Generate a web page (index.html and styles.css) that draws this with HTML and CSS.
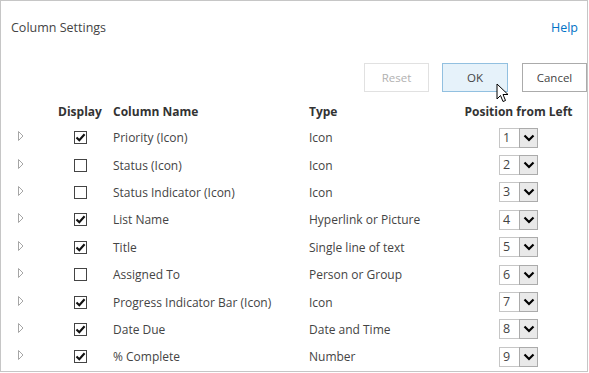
FILE: index.html
```html
<!DOCTYPE html>
<html>
<head>
<meta charset="utf-8">
<link rel="stylesheet" href="styles.css">
</head>
<body>
<div class="frame">
  <div class="titlebar">
    <span class="title">Column Settings</span>
    <a class="help">Help</a>
  </div>
  <div class="buttons">
    <button class="btn disabled">Reset</button>
    <button class="btn primary">OK</button>
    <button class="btn">Cancel</button>
  </div>
  <div class="grid">
    <div class="hd"></div>
    <div class="hd center">Display</div>
    <div class="hd text">Column Name</div>
    <div class="hd text">Type</div>
    <div class="hd center">Position from Left</div>
  </div>
  <div id="rows"></div>
  <svg class="cursor" width="14" height="21" viewBox="0 0 14 21"><path d="M1 1 L1 16 L4.5 12.5 L7 18.5 L9.5 17.5 L7 11.5 L12 11.5 Z" fill="#fff" stroke="#000" stroke-width="1" stroke-linejoin="miter"/></svg>
</div>
<script src="app.js"></script>
</body>
</html>
```
FILE: app.js
```js
var data = [
  [1, "Priority (Icon)", "Icon"],
  [0, "Status (Icon)", "Icon"],
  [0, "Status Indicator (Icon)", "Icon"],
  [1, "List Name", "Hyperlink or Picture"],
  [1, "Title", "Single line of text"],
  [0, "Assigned To", "Person or Group"],
  [1, "Progress Indicator Bar (Icon)", "Icon"],
  [1, "Date Due", "Date and Time"],
  [1, "% Complete", "Number"]
];
var html = "";
data.forEach(function (d, i) {
  html += '<div class="grid row">' +
    '<div class="exp"><svg width="7" height="10" viewBox="0 0 7 10"><path d="M1.5 0.5 L6 5 L1.5 9.5 Z" fill="#fff" stroke="#a6a6a6" stroke-width="1"/></svg></div>' +
    '<div class="center"><span class="cb">' + (d[0] ? '<svg width="11" height="11" viewBox="0 0 11 11"><path d="M1.5 5.5 L4.3 8.3 L9.6 2.2" fill="none" stroke="#111" stroke-width="2.1"/></svg>' : '') + '</span></div>' +
    '<div class="text">' + d[1] + '</div>' +
    '<div class="text">' + d[2] + '</div>' +
    '<div class="center"><span class="sel"><span class="num">' + (i + 1) + '</span><span class="arr"><svg width="12" height="8" viewBox="0 0 12 8"><path d="M1.5 1.5 L6 6 L10.5 1.5" fill="none" stroke="#000" stroke-width="2.2"/></svg></span></span></div>' +
    '</div>';
});
document.getElementById("rows").innerHTML = html;
```
FILE: styles.css
```css
html, body {
  margin: 0;
  padding: 0;
  background: #fff;
}
body {
  font-family: "Open Sans", "Noto Sans", sans-serif;
  font-size: 12px;
  color: #444;
}
.frame {
  position: relative;
  width: 588px;
  height: 372px;
  box-sizing: border-box;
  border: 1px solid #c6c6c6;
  overflow: hidden;
}
.titlebar {
  display: flex;
  justify-content: space-between;
  align-items: center;
  height: 20px;
  margin-top: 16px;
  padding: 0 9px 0 10px;
}
.title {
  font-size: 12.5px;
  color: #444;
}
.help {
  color: #0072c6;
  font-size: 12.5px;
}
.buttons {
  display: flex;
  justify-content: flex-end;
  gap: 13px;
  margin-top: 26px;
  padding-right: 0;
}
.btn {
  box-sizing: border-box;
  height: 29px;
  width: 65px;
  flex: none;
  background: #fff;
  border: 1px solid #ababab;
  font-family: inherit;
  font-size: 11.5px;
  color: #444;
  padding: 0;
}
.btn.primary {
  width: 66px;
  background: #e6f2fa;
  border-color: #92c0e0;
  margin-right: 1px;
}
.btn.disabled {
  width: 65px;
  color: #b1b1b1;
  border-color: #e1e1e1;
}
.grid {
  display: grid;
  grid-template-columns: 42px 56px 196px 151px 127px;
  padding-left: 9px;
  align-items: center;
}
.hd {
  font-weight: 700;
  color: #333;
  height: 24px;
  line-height: 24px;
  margin-top: 8px;
}
.center {
  text-align: center;
  display: flex;
  justify-content: center;
  align-items: center;
}
.text {
  padding-left: 5px;
  white-space: nowrap;
}
.row {
  height: 27.4px;
}
.exp {
  padding-left: 7px;
  display: flex;
  align-items: center;
  margin-top: -3px;
}
.cb {
  box-sizing: border-box;
  width: 13px;
  height: 13px;
  border: 1px solid #444;
  display: flex;
  align-items: center;
  justify-content: center;
  background: #fff;
}
.sel {
  display: flex;
  height: 20px;
  box-sizing: border-box;
}
.num {
  box-sizing: border-box;
  width: 20px;
  height: 20px;
  border: 1px solid #c6c6c6;
  border-right: none;
  line-height: 18px;
  text-align: left;
  padding-left: 3px;
  font-size: 12.5px;
  color: #444;
}
.arr {
  box-sizing: border-box;
  width: 19px;
  height: 20px;
  border: 1px solid #ababab;
  background: #e9e9e9;
  display: flex;
  align-items: center;
  justify-content: center;
}
.cursor {
  position: absolute;
  left: 495px;
  top: 82px;
}
```
